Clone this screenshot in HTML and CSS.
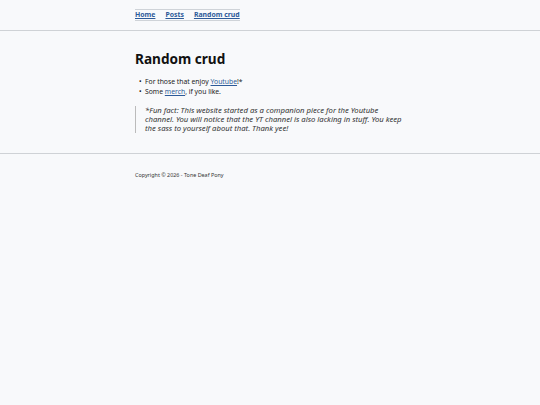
FILE: index.html
```html
<!DOCTYPE html>
<html>
<head>
<meta charset="utf-8">
<link rel="stylesheet" href="styles.css">
</head>
<body>
<header class="site-header">
  <nav class="wrap">
    <ul class="nav">
      <li><a href="#">Home</a></li>
      <li><a href="#">Posts</a></li>
      <li><a href="#">Random crud</a></li>
    </ul>
  </nav>
</header>
<main class="wrap content">
  <h1 class="title">Random crud</h1>
  <ul class="list">
    <li>For those that enjoy <a href="#">Youtube</a>!*</li>
    <li>Some <a href="#">merch</a>, if you like.</li>
  </ul>
  <blockquote class="quote">*Fun fact: This website started as a companion piece for the Youtube channel. You will notice that the YT channel is also lacking in stuff. You keep the sass to yourself about that. Thank yee!</blockquote>
</main>
<footer class="site-footer">
  <p class="wrap copy">Copyright © 2026 - Tone Deaf Pony</p>
</footer>
</body>
</html>
```
FILE: styles.css
```css
html, body {
  margin: 0;
  padding: 0;
  background: #f8f9fb;
  color: #1a1a1a;
  font-family: "Noto Sans", "Open Sans", sans-serif;
  font-size: 6.8px;
}
.wrap {
  width: 270px;
  margin: 0 auto;
}
.site-header {
  border-bottom: 1px solid #cfd2d6;
  padding: 9px 0 9px;
}
.nav {
  list-style: none;
  margin: 0;
  padding: 0;
  display: inline-flex;
  gap: 10px;
  border-top: 1px solid #cfd3d8;
  border-bottom: 1px solid #cfd3d8;
  line-height: 10px;
  font-size: 6.9px;
}
.nav a {
  color: #2c5a99;
  font-weight: bold;
  text-decoration: underline;
}
.content {
  padding: 18.5px 0 20px;
}
.title {
  font-size: 13.6px;
  margin: 0 0 9.5px;
  line-height: 18px;
  color: #111;
}
.list {
  margin: 0;
  padding-left: 10px;
  line-height: 10px;
}
.list li::marker {
  content: "•  ";
}
.list a {
  color: #2c5a99;
}
.quote {
  margin: 9px 0 0;
  padding: 0 0 0 9px;
  border-left: 1px solid #bbb;
  font-style: italic;
  font-size: 7.7px;
  line-height: 9px;
  color: #333;
}
.site-footer {
  border-top: 1px solid #cfd2d6;
}
.copy {
  margin: 0 auto;
  padding: 17.5px 0;
  line-height: 7px;
  font-size: 5.4px;
  color: #333;
}
```
